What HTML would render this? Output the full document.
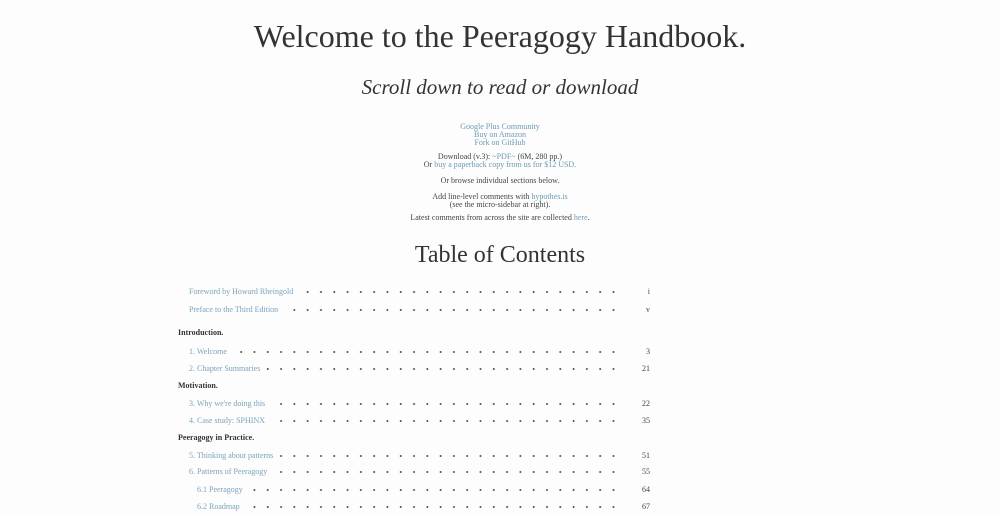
<!DOCTYPE html>
<html><head><style>
body{margin:0;width:1000px;height:514px;background:#fdfdfd;font-family:"Liberation Serif",serif;color:#333;overflow:hidden;position:relative}
.c{position:absolute;left:0;width:1000px;text-align:center;white-space:nowrap}
.s{font-size:8px;line-height:8px;color:#444}
a{color:#6a9ab5;text-decoration:none}
.row{position:absolute;left:175px;width:475px;height:10px;font-size:8px;line-height:10px;
background-image:radial-gradient(circle,#555 0.8px,transparent 1.2px);background-size:13.3px 10px;background-position:126px 0;background-repeat:repeat-x}
.row .t{position:absolute;top:0;left:0;background:#fdfdfd;padding-left:14px;padding-right:6px;color:#7aa3bb;white-space:nowrap}
.row .t.i{padding-left:22px}
.row .p{position:absolute;right:0;top:0;width:28px;text-align:right;background:#fdfdfd;color:#444}
.h{position:absolute;left:178px;font-size:8px;font-weight:bold;color:#333}
</style></head><body>
<div class="c" style="top:18px;font-size:32px;color:#333">Welcome to the Peeragogy Handbook.</div>
<div class="c" style="top:75px;font-size:21px;font-style:italic;color:#333">Scroll down to read or download</div>
<div class="c s" style="top:123px"><a>Google Plus Community</a></div>
<div class="c s" style="top:131px"><a>Buy on Amazon</a></div>
<div class="c s" style="top:139px"><a>Fork on GitHub</a></div>
<div class="c s" style="top:153px">Download (v.3): <a>~PDF~</a> (6M, 280 pp.)</div>
<div class="c s" style="top:161px">Or <a>buy a paperback copy from us for $12 USD.</a></div>
<div class="c s" style="top:177px">Or browse individual sections below.</div>
<div class="c s" style="top:193px">Add line-level comments with <a>hypothes.is</a></div>
<div class="c s" style="top:201px">(see the micro-sidebar at right).</div>
<div class="c s" style="top:214px">Latest comments from across the site are collected <a>here</a>.</div>
<div class="c" style="top:242px;font-size:24px;color:#333">Table of Contents</div>

<div class="row" style="top:287px"><span class="t">Foreword by Howard Rheingold</span><span class="p">i</span></div>
<div class="row" style="top:305px"><span class="t">Preface to the Third Edition</span><span class="p">v</span></div>
<div class="h" style="top:328px">Introduction.</div>
<div class="row" style="top:347px"><span class="t">1. Welcome</span><span class="p">3</span></div>
<div class="row" style="top:364px"><span class="t">2. Chapter Summaries</span><span class="p">21</span></div>
<div class="h" style="top:381px">Motivation.</div>
<div class="row" style="top:399px"><span class="t">3. Why we're doing this</span><span class="p">22</span></div>
<div class="row" style="top:416px"><span class="t">4. Case study: SPHINX</span><span class="p">35</span></div>
<div class="h" style="top:433px">Peeragogy in Practice.</div>
<div class="row" style="top:451px"><span class="t">5. Thinking about patterns</span><span class="p">51</span></div>
<div class="row" style="top:467px"><span class="t">6. Patterns of Peeragogy</span><span class="p">55</span></div>
<div class="row" style="top:485px"><span class="t i">6.1 Peeragogy</span><span class="p">64</span></div>
<div class="row" style="top:502px"><span class="t i">6.2 Roadmap</span><span class="p">67</span></div>
</body></html>
